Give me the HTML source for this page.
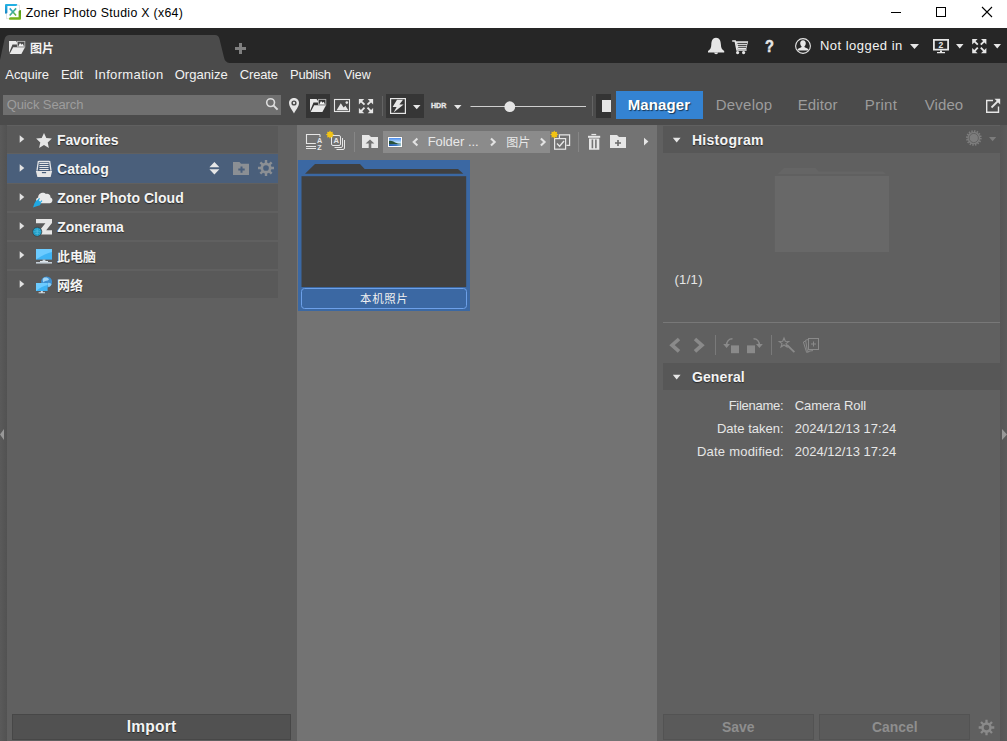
<!DOCTYPE html>
<html lang="en">
<head>
<meta charset="utf-8">
<title>Zoner Photo Studio X (x64)</title>
<style>
*{box-sizing:border-box;margin:0;padding:0}
html,body{width:1007px;height:741px;overflow:hidden;background:#4b4b4b}
body{position:relative;font-family:"Liberation Sans","Noto Sans CJK SC",sans-serif;font-size:12px;color:#f0f0f0}
.a{position:absolute}
.t{position:absolute;white-space:nowrap;line-height:1}
svg{position:absolute;overflow:visible}
#titlebar{left:0;top:0;width:1007px;height:28px;background:#fff}
#tabbar{left:0;top:28px;width:1007px;height:35px;background:#262626}
#menubar{left:0;top:63px;width:1007px;height:62px;background:#4b4b4b}
.menu{color:#f2f2f2;font-size:12.6px;top:69px}
.mod{color:#9c9c9c;font-size:14.6px;top:97px}
#left{left:0;top:125px;width:297px;height:616px;background:#606060}
#center{left:297px;top:125px;width:360px;height:616px;background:#737373}
#right{left:657px;top:125px;width:350px;height:616px;background:#606060}
.row{left:7px;width:271px;height:27px;background:#595959}
.rowt{font-weight:bold;font-size:13.6px;color:#f4f4f4;left:57px;text-shadow:0 1px 1px rgba(0,0,0,.55)}
.tri{width:0;height:0;border-left:5px solid #e4e4e4;border-top:4px solid transparent;border-bottom:4px solid transparent}
.lab{color:#e6e6e6;font-size:12.6px}
</style>
</head>
<body>
<!-- ===== Title bar ===== -->
<div class="a" id="titlebar"></div>

<!-- ===== Tab bar ===== -->
<div class="a" id="tabbar"></div>
<svg class="a" style="left:0;top:35px" width="230" height="28" viewBox="0 0 230 28"><path d="M0 28 L0 25 L4.6 4 Q5.6 0 9.5 0 L215 0 Q218.6 0 219.5 4 L224 22.6 Q225 27.6 229.5 28 Z" fill="#4b4b4b"/></svg>

<!-- ===== Menu + toolbar ===== -->
<div class="a" id="menubar"></div>

<div class="a" style="left:3px;top:95px;width:278px;height:20px;background:#6f6f6f"></div>

<div class="a" style="left:616px;top:91px;width:87px;height:28px;background:#3483d2"></div>

<!-- ===== Panels ===== -->
<div class="a" id="left"></div>
<div class="a" id="center"></div>
<div class="a" id="right"></div>

<div class="a" style="left:0;top:125px;width:7px;height:616px;background:linear-gradient(90deg,#5a5a5a,#525252)"></div>
<div class="a" style="left:1000px;top:125px;width:7px;height:616px;background:linear-gradient(90deg,#565656,#5b5b5b)"></div>
<!-- left tree -->
<div class="a row" style="top:126px"></div>
<div class="a row" style="top:154px;height:29px;background:#4a5f7b"></div>
<div class="a row" style="top:184px"></div>
<div class="a row" style="top:213px"></div>
<div class="a row" style="top:242px"></div>
<div class="a row" style="top:271px"></div>

<!-- Import button -->
<div class="a" style="left:12px;top:714px;width:279px;height:26px;background:#515151;border:1px solid #474747"></div>

<!-- center -->
<div class="a" style="left:383px;top:131px;width:167px;height:22px;background:#8b8b8b"></div>
<div class="a" style="left:298px;top:160px;width:172px;height:151px;background:#3b68a3"></div>

<!-- right -->
<div class="a" style="left:663px;top:126px;width:337px;height:27px;background:#575757"></div>
<div class="a" style="left:663px;top:363px;width:337px;height:27px;background:#575757"></div>

<div class="a" style="left:663px;top:714px;width:151px;height:26px;background:#5a5a5a;border:1px solid #535353"></div>
<div class="a" style="left:819px;top:714px;width:151px;height:26px;background:#5a5a5a;border:1px solid #535353"></div>

<div class="t" id="t0" style="left:25.79px;top:6.87px;font-size:12.3px;color:#000;letter-spacing:0.323px">Zoner Photo Studio X (x64)</div>
<div class="t" id="t1" style="left:819.92px;top:39.02px;font-size:13px;color:#f2f2f2;letter-spacing:0.478px">Not logged in</div>
<div class="t" id="t2" style="left:5.32px;top:68.02px;font-size:13px;color:#f2f2f2;letter-spacing:-0.078px">Acquire</div>
<div class="t" id="t3" style="left:60.92px;top:68.02px;font-size:13px;color:#f2f2f2;letter-spacing:-0.093px">Edit</div>
<div class="t" id="t4" style="left:94.59px;top:68.02px;font-size:13px;color:#f2f2f2;letter-spacing:0.354px">Information</div>
<div class="t" id="t5" style="left:174.64px;top:68.02px;font-size:13px;color:#f2f2f2;letter-spacing:0.041px">Organize</div>
<div class="t" id="t6" style="left:239.71px;top:68.02px;font-size:13px;color:#f2f2f2;letter-spacing:-0.141px">Create</div>
<div class="t" id="t7" style="left:290.00px;top:68.02px;font-size:13px;color:#f2f2f2;letter-spacing:-0.262px">Publish</div>
<div class="t" id="t8" style="left:343.66px;top:68.02px;font-size:13px;color:#f2f2f2;transform:scaleX(0.9559);transform-origin:0 0">View</div>
<div class="t" id="t9" style="left:6.65px;top:98.02px;font-size:13px;color:#9d9d9d;letter-spacing:-0.110px">Quick Search</div>
<div class="t" id="t10" style="left:627.63px;top:97.02px;font-size:15px;color:#fff;font-weight:bold;letter-spacing:0.145px;text-shadow:1px 1px 1px rgba(0,0,0,.6)">Manager</div>
<div class="t" id="t11" style="left:715.70px;top:97.02px;font-size:15px;color:#9c9c9c;letter-spacing:0.240px">Develop</div>
<div class="t" id="t12" style="left:797.70px;top:97.02px;font-size:15px;color:#9c9c9c;letter-spacing:0.134px">Editor</div>
<div class="t" id="t13" style="left:864.87px;top:97.02px;font-size:15px;color:#9c9c9c;letter-spacing:0.281px">Print</div>
<div class="t" id="t14" style="left:924.69px;top:97.02px;font-size:15px;color:#9c9c9c;letter-spacing:0.109px">Video</div>
<div class="t" id="t15" style="left:56.91px;top:133.02px;font-size:14px;color:#f4f4f4;font-weight:bold;letter-spacing:-0.077px;text-shadow:0 1px 1px rgba(0,0,0,.55)">Favorites</div>
<div class="t" id="t16" style="left:56.98px;top:162.02px;font-size:14px;color:#f4f4f4;font-weight:bold;letter-spacing:0.068px;text-shadow:0 1px 1px rgba(0,0,0,.55)">Catalog</div>
<div class="t" id="t17" style="left:57.17px;top:191.02px;font-size:14px;color:#f4f4f4;font-weight:bold;letter-spacing:0.035px;text-shadow:0 1px 1px rgba(0,0,0,.55)">Zoner Photo Cloud</div>
<div class="t" id="t18" style="left:57.17px;top:220.02px;font-size:14px;color:#f4f4f4;font-weight:bold;letter-spacing:-0.034px;text-shadow:0 1px 1px rgba(0,0,0,.55)">Zonerama</div>
<div class="t" id="t19" style="left:427.64px;top:135.02px;font-size:13px;color:#e8e8e8;letter-spacing:-0.025px">Folder ...</div>
<div class="t" id="t20" style="left:691.91px;top:133.02px;font-size:14px;color:#f4f4f4;font-weight:bold;letter-spacing:0.296px;text-shadow:0 1px 1px rgba(0,0,0,.55)">Histogram</div>
<div class="t" id="t21" style="left:674.48px;top:273.02px;font-size:13px;color:#e6e6e6;letter-spacing:0.316px">(1/1)</div>
<div class="t" id="t22" style="left:691.98px;top:370.02px;font-size:14px;color:#f4f4f4;font-weight:bold;letter-spacing:0.109px;text-shadow:0 1px 1px rgba(0,0,0,.55)">General</div>
<div class="t" id="t23" style="left:728.66px;top:399.02px;font-size:13px;color:#e6e6e6;letter-spacing:-0.254px">Filename:</div>
<div class="t" id="t24" style="left:794.70px;top:399.02px;font-size:13px;color:#e6e6e6;letter-spacing:-0.070px">Camera Roll</div>
<div class="t" id="t25" style="left:716.92px;top:422.02px;font-size:13px;color:#e6e6e6;letter-spacing:0.031px">Date taken:</div>
<div class="t" id="t26" style="left:794.73px;top:422.02px;font-size:13px;color:#e6e6e6;letter-spacing:0.013px">2024/12/13 17:24</div>
<div class="t" id="t27" style="left:697.00px;top:445.02px;font-size:13px;color:#e6e6e6;letter-spacing:0.215px">Date modified:</div>
<div class="t" id="t28" style="left:794.73px;top:445.02px;font-size:13px;color:#e6e6e6;letter-spacing:0.013px">2024/12/13 17:24</div>
<div class="t" id="t29" style="left:126.70px;top:718.72px;font-size:15.6px;color:#f4f4f4;font-weight:bold;letter-spacing:0.196px;text-shadow:0 1px 1px rgba(0,0,0,.55)">Import</div>
<div class="t" id="t30" style="left:722.25px;top:719.02px;font-size:15px;color:#8e8e8e;font-weight:bold;transform:scaleX(0.9311);transform-origin:0 0">Save</div>
<div class="t" id="t31" style="left:872.29px;top:719.02px;font-size:15px;color:#8e8e8e;font-weight:bold;transform:scaleX(0.9255);transform-origin:0 0">Cancel</div>
<div class="t" style="left:30px;top:43px;font-size:12px;font-weight:bold;color:#f4f4f4">图片</div>
<div class="t" style="left:765px;top:38px;font-size:17.4px;font-weight:bold;color:#e6e6e6;-webkit-text-stroke:0.5px #e6e6e6;transform:scaleX(0.84);transform-origin:0 0">?</div>
<div class="t" style="left:938.5px;top:40.5px;font-size:8.5px;font-weight:bold;color:#e6e6e6">2</div>
<div class="t" style="left:431px;top:103px;font-size:7.1px;font-weight:bold;color:#e6e6e6;letter-spacing:0px;-webkit-text-stroke:0.35px #e6e6e6">HDR</div>
<div class="t" style="left:57px;top:250px;font-size:13px;font-weight:bold;color:#f4f4f4;text-shadow:0 1px 1px rgba(0,0,0,.55)">此电脑</div>
<div class="t" style="left:57px;top:279px;font-size:13px;font-weight:bold;color:#f4f4f4;text-shadow:0 1px 1px rgba(0,0,0,.55)">网络</div>
<div class="t" style="left:506.2px;top:136.6px;font-size:12px;color:#e8e8e8">图片</div>
<div class="t" style="left:360px;top:294.4px;letter-spacing:0.75px;font-size:11.4px;color:#f0f0f0">本机照片</div>
<div class="t" style="left:317px;top:137.3px;font-size:7.2px;font-weight:bold;color:#e6e6e6">A</div>
<div class="t" style="left:317.3px;top:143.8px;font-size:7.2px;font-weight:bold;color:#e6e6e6">Z</div>
<div class="t" style="left:333.5px;top:137px;font-size:7.6px;font-weight:bold;color:#e6e6e6">A</div>

<!-- ===== Icon overlay (page pixel coordinates) ===== -->
<svg id="ico" class="a" style="left:0;top:0" width="1007" height="741" viewBox="0 0 1007 741">
<!-- app icon -->
<g id="appicon">
<defs><linearGradient id="xg" x1="0" y1="0" x2="1" y2="1"><stop offset="0" stop-color="#2f9be0"/><stop offset="0.5" stop-color="#3fae9a"/><stop offset="1" stop-color="#72b822"/></linearGradient>
<linearGradient id="bg1" x1="0" y1="0" x2="0" y2="1"><stop offset="0" stop-color="#22b4e6"/><stop offset="1" stop-color="#1b86c4"/></linearGradient>
<linearGradient id="gg1" x1="0" y1="0" x2="0" y2="1"><stop offset="0" stop-color="#4f9614"/><stop offset="1" stop-color="#7ab81a"/></linearGradient></defs>
<rect x="6.6" y="5.2" width="12.9" height="13.5" fill="#fff" stroke="#dedede" stroke-width="0.8"/>
<path d="M6 3.9 H16.4 Q17.6 3.9 17.2 5 Q16.8 6.1 15.6 6.1 H7.4 V12.4 Q7.4 13.2 6.2 13.6 Q5 14 5 12.8 V4.9 Q5 3.9 6 3.9 Z" fill="url(#bg1)"/>
<path d="M20 19.7 H10 Q8.6 19.7 9 18.5 Q9.4 17.3 10.6 17.3 H18.6 V11.4 Q18.6 10.6 19.8 10.2 Q21 9.8 21 11 V18.7 Q21 19.7 20 19.7 Z" fill="url(#gg1)"/>
<path d="M9.7 8.4 L16.1 15.5 M16.1 8.4 L9.7 15.5" stroke="url(#xg)" stroke-width="1.6" fill="none"/>
</g>
<!-- window controls -->
<path d="M891 12.5 H901" stroke="#000" stroke-width="1"/>
<rect x="936.5" y="7.5" width="9" height="9" fill="none" stroke="#000" stroke-width="1"/>
<path d="M982 7 L992 17 M992 7 L982 17" stroke="#000" stroke-width="1.1"/>
<!-- tab folder icon -->
<g fill="#e9e9e9">
<path d="M9 41 H16 L17.5 43 H17 V44.5 H12.5 L9 53 Z"/>
<path d="M13.2 47.2 H25 L21.4 54 H9.6 Z"/>
<rect x="17.4" y="41.4" width="7.4" height="5.6" fill="#4b4b4b" stroke="#b4b4b4" stroke-width="0.9"/>
<path d="M18.2 46.4 L20 43 L21.6 44.8 L22.8 43.8 L24 46.4 Z" fill="#f4f4f4"/>
</g>
<!-- plus -->
<path d="M235 48.5 H246 M240.5 43 V54" stroke="#808080" stroke-width="3"/>

<!-- top right icons -->
<g fill="#e6e6e6">
<!-- bell -->
<path d="M716 37.8 C712.6 37.8 711.4 41 711.3 44.6 C711.2 48 710.4 49.8 708 51 V52.4 H724.2 V51 C721.8 49.8 721 48 720.9 44.6 C720.8 41 719.6 37.8 716 37.8 Z"/>
<path d="M714.2 52.4 H718 V52.8 A1.9 1.4 0 0 1 714.2 52.8 Z"/>
<!-- cart -->
<path d="M735.6 41.2 H748.2 L746.3 48.9 H737.4 Z"/>
<path d="M732.2 41 H735.2 L737 49.9 H746.6" fill="none" stroke="#e6e6e6" stroke-width="1.5"/>
<circle cx="737.6" cy="52.6" r="1.6"/><circle cx="743.6" cy="52.6" r="1.6"/>
</g>
<g stroke="#262626" stroke-width="0.9" fill="none">
<path d="M737.4 43.4 H747 M737.8 45.4 H746.6 M738.2 47.3 H746.2"/>
</g>
<!-- user -->
<circle cx="803" cy="46" r="7.4" fill="none" stroke="#e6e6e6" stroke-width="1.1"/>
<path d="M803 40.2 C805 40.2 805.8 41.8 805.8 43.3 C805.8 44.8 805 46 804.3 46.6 C804.5 47.6 806.5 48 808.2 49 C808.6 49.4 808.4 50.2 808 50.6 H798 C797.6 50.2 797.4 49.4 797.8 49 C799.5 48 801.5 47.6 801.7 46.6 C801 46 800.2 44.8 800.2 43.3 C800.2 41.8 801 40.2 803 40.2 Z" fill="#e6e6e6"/>
<!-- arrows -->
<path d="M910 44 H919 L914.5 49 Z M956 44 H963.5 L959.75 48.5 Z M993.5 44 H1001 L997.25 48.5 Z" fill="#e6e6e6"/>
<!-- monitor -->
<path d="M933 39 H949 V50.5 H933 Z M934.8 40.8 V48.7 H947.2 V40.8 Z" fill="#e6e6e6" fill-rule="evenodd"/>
<path d="M940 50.5 H942 V52 H945 V53.3 H937 V52 H940 Z" fill="#e6e6e6"/>
<!-- fullscreen arrows -->
<g fill="#e6e6e6" stroke="none" transform="translate(972.2,39.1)"><path d="M0 0 H5.4 L0 5.4 Z"/><path d="M14.2 0 V5.4 L8.799999999999999 0 Z"/><path d="M0 14.2 V8.799999999999999 L5.4 14.2 Z"/><path d="M14.2 14.2 H8.799999999999999 L14.2 8.799999999999999 Z"/><path d="M2 2 L5.6 5.6 M12.2 2 L8.6 5.6 M2 12.2 L5.6 8.6 M12.2 12.2 L8.6 8.6" stroke="#e6e6e6" stroke-width="1.9" fill="none"/></g>

<!-- toolbar row -->
<!-- magnifier -->
<circle cx="270.6" cy="102.6" r="3.9" fill="none" stroke="#dcdcdc" stroke-width="1.6"/>
<path d="M273.4 105.4 L277.6 109.6" stroke="#dcdcdc" stroke-width="2"/>
<!-- pin -->
<path d="M294 98 C291 98 289 100.2 289 103 C289 106.5 292.5 110.5 294 113.5 C295.5 110.5 299 106.5 299 103 C299 100.2 297 98 294 98 Z M294 100.4 A2.6 2.6 0 1 1 294 105.6 A2.6 2.6 0 1 1 294 100.4 Z" fill="#e6e6e6" fill-rule="evenodd"/>
<circle cx="294" cy="103" r="1.15" fill="#e6e6e6"/>
<!-- active folder button -->
<rect x="306" y="94" width="24" height="24" fill="#343434"/>
<g fill="#e9e9e9">
<path d="M310 99 H316.5 L318 101 V102.5 H313.5 L310 111 Z"/>
<path d="M314.2 105.2 H326 L322.4 112 H310.6 Z"/>
<rect x="318.4" y="99.4" width="7.4" height="5.6" fill="#343434" stroke="#b4b4b4" stroke-width="0.9"/>
<path d="M319.2 104.4 L321 101 L322.6 102.8 L323.8 101.8 L325 104.4 Z" fill="#f4f4f4"/>
</g>
<!-- image icon -->
<rect x="334.5" y="99.5" width="15" height="12" fill="none" stroke="#e6e6e6" stroke-width="1.1"/>
<path d="M336.6 110.2 L340.8 103.2 L343.6 107.6 L345.4 105.8 L348.4 110.2 Z" fill="#e6e6e6"/>
<circle cx="346.8" cy="102.6" r="1.3" fill="#e6e6e6"/>
<!-- expand arrows -->
<g fill="#e6e6e6" stroke="none" transform="translate(358.9,99.1)"><path d="M0 0 H5.4 L0 5.4 Z"/><path d="M14.2 0 V5.4 L8.799999999999999 0 Z"/><path d="M0 14.2 V8.799999999999999 L5.4 14.2 Z"/><path d="M14.2 14.2 H8.799999999999999 L14.2 8.799999999999999 Z"/><path d="M2 2 L5.6 5.6 M12.2 2 L8.6 5.6 M2 12.2 L5.6 8.6 M12.2 12.2 L8.6 8.6" stroke="#e6e6e6" stroke-width="1.9" fill="none"/></g>
<!-- separators -->
<path d="M382.5 96 V116 M592.5 96 V116" stroke="#636363" stroke-width="1"/>
<!-- lightning button -->
<rect x="386" y="94" width="38" height="24" fill="#363636"/>
<rect x="390.6" y="98.6" width="14.8" height="14.8" fill="none" stroke="#e6e6e6" stroke-width="1.2"/>
<path d="M401 99.8 H397 L392.6 107 H396.6 L393.6 112.6 L403.6 104.4 H399.4 L403 99.8 Z" fill="#e6e6e6"/>
<path d="M413 105 H420.5 L416.75 109.3 Z M454 105 H461.5 L457.75 109.3 Z" fill="#e6e6e6"/>
<!-- slider -->
<path d="M470.5 106.5 H586" stroke="#cfcfcf" stroke-width="1"/>
<circle cx="509.8" cy="106.7" r="5.4" fill="#e4e4e4"/>
<!-- dark button w/ white rect -->
<rect x="596" y="94" width="15" height="24" fill="#343434"/>
<rect x="602" y="100" width="9" height="12" fill="#e6e6e6"/>
<!-- external link -->
<path d="M993 100.5 H986.7 V112.3 H998.5 V106.5" fill="none" stroke="#e6e6e6" stroke-width="1.4"/>
<path d="M991.5 107.5 L998 101" stroke="#e6e6e6" stroke-width="1.8"/>
<path d="M994.5 98.8 H1000.2 V104.5 Z" fill="#e6e6e6"/>

<!-- tree arrows -->
<g fill="#e2e2e2">
<path d="M19.7 135.2 L24.3 139 L19.7 142.8 Z"/>
<path d="M19.7 164.2 L24.3 168 L19.7 171.8 Z"/>
<path d="M19.7 193.2 L24.3 197 L19.7 200.8 Z"/>
<path d="M19.7 222.2 L24.3 226 L19.7 229.8 Z"/>
<path d="M19.7 251.2 L24.3 255 L19.7 258.8 Z"/>
<path d="M19.7 280.2 L24.3 284 L19.7 287.8 Z"/>
</g>
<!-- star -->
<path d="M44.0 132.9 L46.3 138.0 L51.9 138.6 L47.7 142.4 L48.9 147.9 L44.0 145.1 L39.1 147.9 L40.3 142.4 L36.1 138.6 L41.7 138.0 Z" fill="#e6e6e6"/>
<!-- catalog -->
<g>
<path d="M38.6 161.5 H49.4" stroke="#e6e6e6" stroke-width="1.5"/>
<path d="M39.4 163.5 H48.6 M39.4 165.5 H48.6 M39.4 167.5 H48.6 M39.4 169.5 H48.6" stroke="#e6e6e6" stroke-width="1"/>
<path d="M38.4 161 L37 170.6 M49.6 161 L51 170.6" stroke="#e6e6e6" stroke-width="1.3"/>
<path d="M35.9 171 H52.1 L50.6 177 H37.4 Z" fill="#e6e6e6"/>
<path d="M41.9 172.6 H46.1" stroke="#4a5f7b" stroke-width="1.2"/>
</g>
<!-- cloud -->
<path d="M39.6 203.2 C35.4 203.2 34.8 198.4 38.2 197.4 C38 193.4 43.2 191.2 46 194 C47.4 193.2 50.8 194.2 50.5 197.4 C53.4 198 53 203.2 49.6 203.2 Z" fill="#e9e9e9"/>
<path d="M33 207.4 L34.4 203.4 L36.2 200.6 L38.4 199.8 L41.2 203 L40 205.2 L36.6 206.2 Z" fill="#20a8e2"/>
<path d="M38 200.4 L39.5 198.4 M40.4 202.4 L42 200.6" stroke="#20a8e2" stroke-width="1.1"/>
<!-- zonerama -->
<path d="M36 219 H52 V223 L46.2 230.3 H52 V234.4 H36 V230.3 H39.8 L45.4 223.3 H36 Z" fill="#e6e6e6"/>
<circle cx="37.2" cy="231.8" r="4.6" fill="#1b98c2" stroke="#404040" stroke-width="0.8"/>
<path d="M33.5 231.8 H41 M37.2 228 V235.6 M34.6 229.5 C36.3 230.5 38.1 230.5 39.8 229.5 M34.6 234.1 C36.3 233.1 38.1 233.1 39.8 234.1" stroke="#5ec6e6" stroke-width="0.6" fill="none"/>
<!-- this pc -->
<rect x="36" y="249" width="16" height="10.6" fill="#3fb4f5"/>
<path d="M36 249 H52 V252 C46 253.5 41 256 36 259.6 Z" fill="#6ccbff"/>
<path d="M42.6 259.6 H45.4 V261.2 H42.6 Z" fill="#c8d4dc"/>
<path d="M36 262 H52 V263.6 H36 Z" fill="#c3cdd6"/>
<path d="M40 261 H48 V262 H40 Z" fill="#dfe6ec"/>
<!-- network -->
<circle cx="46.6" cy="282" r="5.5" fill="#3d8fd0"/>
<path d="M43.5 278 C45.5 277 48 277.5 49 279.5 C47.5 281.5 45 280 43.5 282.5 C42.5 281 42.5 279 43.5 278 Z" fill="#9fd4f5"/>
<path d="M48 283 C49.5 282.5 51 283.5 51.5 284.5 C50.8 286 49.5 287 48.5 287 C47.5 285.5 47.5 284 48 283 Z" fill="#8ccbf0"/>
<rect x="36" y="283" width="11.6" height="8" fill="#3fb4f5"/>
<path d="M36 283 H47.6 V285 C43 286 39.5 288 36 291 Z" fill="#6ccbff"/>
<path d="M40.8 291 H42.8 V292.2 H45 V293.2 H38.6 V292.2 H40.8 Z" fill="#d4dde4"/>
<!-- sort arrows, folder+, gear in catalog row -->
<path d="M214.4 162 L219.4 167.2 H209.4 Z M214.4 174.4 L219.4 169.2 H209.4 Z" fill="#e6e6e6"/>
<path d="M233 162 H239.5 L241 163.8 H249 V175 H233 Z" fill="#8b8f94"/>
<path d="M238.3 169.6 H244.7 M241.5 166.4 V172.8" stroke="#4a5f7b" stroke-width="2"/>
<g id="gear1" transform="translate(266,168)">
<circle r="4.2" fill="none" stroke="#8b8f94" stroke-width="2.7"/>
<g stroke="#8b8f94" stroke-width="2.4">
<path d="M0 -5 V-8 M0 5 V8 M-5 0 H-8 M5 0 H8 M3.54 -3.54 L5.66 -5.66 M-3.54 3.54 L-5.66 5.66 M3.54 3.54 L5.66 5.66 M-3.54 -3.54 L-5.66 -5.66"/>
</g>
</g>
<!-- edge collapse arrows -->
<path d="M4 429 V440 L0 434.5 Z" fill="#989898"/>
<path d="M1002 429 V440 L1007 434.5 Z" fill="#989898"/>

<!-- center toolbar icons -->
<g>
<path d="M320 134.5 H306.5 V143.5 H315.8" fill="none" stroke="#e6e6e6" stroke-width="1.1"/>
<path d="M320 134.5 V137" fill="none" stroke="#e6e6e6" stroke-width="1.1"/>
<path d="M306 146.5 H316 M306 148.5 H316" stroke="#e6e6e6" stroke-width="1"/>
</g>
<!-- rename stack -->
<g fill="none" stroke="#e6e6e6" stroke-width="1">
<rect x="331.5" y="135.5" width="9" height="10" rx="1.5"/>
<path d="M342.5 138 V146 Q342.5 147.5 341 147.5 H334.5"/>
<path d="M344.5 140 V148 Q344.5 149.5 343 149.5 H336.5"/>
</g>
<path d="M330.0 130.5 L331.0 132.1 L332.9 131.7 L332.5 133.6 L334.1 134.6 L332.5 135.6 L332.9 137.5 L331.0 137.1 L330.0 138.7 L329.0 137.1 L327.1 137.5 L327.5 135.6 L325.9 134.6 L327.5 133.6 L327.1 131.7 L329.0 132.1 Z" fill="#f2c313"/>
<path d="M354.5 132 V152 M578.5 132 V152" stroke="#868686" stroke-width="1"/>
<!-- folder up -->
<path d="M362 135 H369 L371 137 H378 V148 H371.3 V143.6 H374.4 L370 139.6 L365.6 143.6 H368.7 V148 H362 Z" fill="#e6e6e6"/>
<!-- picture icon in breadcrumb -->
<defs><linearGradient id="sky" x1="0" y1="0" x2="0" y2="1"><stop offset="0" stop-color="#4a8cf0"/><stop offset="0.6" stop-color="#cdeaf8"/><stop offset="1" stop-color="#d8f0f4"/></linearGradient>
<linearGradient id="wat" x1="0" y1="0" x2="1" y2="0"><stop offset="0" stop-color="#1f55b4"/><stop offset="0.6" stop-color="#3a78c8"/><stop offset="1" stop-color="#9cc8cc"/></linearGradient></defs>
<rect x="387" y="136" width="16" height="12" fill="#7c7c7c" opacity="0.3"/>
<rect x="388" y="137" width="14" height="10" fill="#fdfdfd"/>
<rect x="389" y="138" width="12" height="8" fill="url(#sky)"/>
<path d="M389 141 C391 140.2 393 141.2 395 142.4 C397 143.2 399 143.5 401 143.7 V144.4 H389 Z" fill="#28523a"/>
<rect x="389" y="144.2" width="12" height="1.8" fill="url(#wat)"/>
<!-- chevrons -->
<g fill="none" stroke="#e2e2e2" stroke-width="2.1">
<path d="M417.4 138.4 L413.7 142 L417.4 145.6"/>
<path d="M491 138.4 L494.7 142 L491 145.6"/>
<path d="M540.9 138.4 L544.6 142 L540.9 145.6"/>
</g>
<!-- select icon -->
<g fill="none" stroke="#e6e6e6" stroke-width="1.2">
<path d="M559.4 138 V134.8 H569.6 V145.4 H566.4"/>
<rect x="554.6" y="138.6" width="11" height="10.6"/>
<path d="M557 143.6 L559.6 146.2 L564 141" stroke-width="1.4"/>
</g>
<path d="M554.3 130.5 L555.3 132.1 L557.2 131.7 L556.8 133.6 L558.4 134.6 L556.8 135.6 L557.2 137.5 L555.3 137.1 L554.3 138.7 L553.3 137.1 L551.4 137.5 L551.8 135.6 L550.2 134.6 L551.8 133.6 L551.4 131.7 L553.3 132.1 Z" fill="#f2c313"/>
<!-- trash -->
<g fill="#e6e6e6">
<path d="M591.4 133.9 H596.2 V135.2 H591.4 Z"/>
<path d="M588 135.8 H600.2 V137.8 H588 Z"/>
<path d="M589 138.6 H599.3 V149.8 H589 Z M591.6 139.5 V148.2 H593.2 V139.5 Z M595.1 139.5 V148.2 H596.7 V139.5 Z" fill-rule="evenodd"/>
</g>
<!-- new folder -->
<path d="M610 135 H617 L619 137 H626 V148 H610 Z" fill="#e6e6e6"/>
<path d="M615 143 H621 M618 140 V146" stroke="#6a6a6a" stroke-width="1.6"/>
<!-- right arrow -->
<path d="M644 137.8 L648.4 141.6 L644 145.4 Z" fill="#e6e6e6"/>
<!-- thumbnail folder -->
<path d="M305 173.7 L315 164 H360 L364.7 169 H458 L463.3 173.7 Z" fill="#404040"/>
<rect x="301.5" y="176.2" width="164.7" height="110.8" fill="#404040"/>
<rect x="301.5" y="288.5" width="165" height="20" rx="3" fill="none" stroke="#6da0e8" stroke-width="1"/>

<!-- right panel -->
<path d="M672.8 137.8 H680.6 L676.7 142.6 Z M672.8 374.8 H680.6 L676.7 379.6 Z" fill="#e6e6e6"/>
<!-- histogram settings icon -->
<g transform="translate(973.8,138)">
<circle r="6.9" fill="none" stroke="#7d7d7d" stroke-width="1.9" stroke-dasharray="1.45 1.26"/>
<circle r="6.3" fill="#7d7d7d"/>
<circle r="4.6" fill="none" stroke="#5c5c5c" stroke-width="0.8"/>
</g>
<path d="M989 137 H996.2 L992.6 141.2 Z" fill="#7c7c7c"/>
<!-- folder silhouette -->
<path d="M777.8 174 L784 168 H815.5 L818.5 171.5 H883 L886 174 Z" fill="#656565"/>
<rect x="774.8" y="176" width="114.2" height="76" fill="#686868"/>
<!-- line -->
<path d="M663 322.5 H1000" stroke="#787878" stroke-width="1"/>
<!-- mini toolbar -->
<g fill="none" stroke="#8a8a8a" stroke-width="3.6">
<path d="M679 339 L672 345.2 L679 351.4"/>
<path d="M695 339 L702 345.2 L695 351.4"/>
</g>
<path d="M715.5 335 V355 M771.5 335 V355" stroke="#7a7a7a" stroke-width="1"/>
<rect x="731" y="345.4" width="8" height="7.8" fill="#8a8a8a"/>
<rect x="747" y="345.4" width="8" height="7.8" fill="#8a8a8a"/>
<path d="M732.5 338.8 C728.8 338.8 726.6 341.6 726.6 345.4" fill="none" stroke="#8a8a8a" stroke-width="1.6"/>
<path d="M723.2 344 H730 L726.6 348 Z" fill="#8a8a8a"/>
<path d="M753.5 338.8 C757.2 338.8 759.4 341.6 759.4 345.4" fill="none" stroke="#8a8a8a" stroke-width="1.6"/>
<path d="M756 344 H762.8 L759.4 348 Z" fill="#8a8a8a"/>
<!-- wand -->
<path d="M784 338 L785.3 341.2 L788.8 341.4 L786 343.6 L787 347 L784 345 L781 347 L782 343.6 L779.2 341.4 L782.7 341.2 Z" fill="none" stroke="#8a8a8a" stroke-width="1.1"/>
<path d="M787 345 L794.4 352.2" stroke="#8a8a8a" stroke-width="1.8"/>
<!-- add collection -->
<g fill="none" stroke="#8a8a8a" stroke-width="1">
<rect x="808.5" y="338.5" width="10" height="11"/>
<path d="M808 339.6 L805.6 340.2 L807.4 351.4 L813 350.6"/>
<path d="M805.4 341.2 L803.4 342 L806.6 352.4 L809.5 351.6"/>
<path d="M811 344 H816 M813.5 341.5 V346.5"/>
</g>
<!-- bottom gear -->
<g transform="translate(986.5,727.5)">
<circle r="4" fill="none" stroke="#8a8a8a" stroke-width="2.5"/>
<g stroke="#8a8a8a" stroke-width="2.3">
<path d="M0 -4.6 V-7.8 M0 4.6 V7.8 M-4.6 0 H-7.8 M4.6 0 H7.8 M3.25 -3.25 L5.5 -5.5 M-3.25 3.25 L-5.5 5.5 M3.25 3.25 L5.5 5.5 M-3.25 -3.25 L-5.5 -5.5"/>
</g>
</g>
</svg>
</body>
</html>
